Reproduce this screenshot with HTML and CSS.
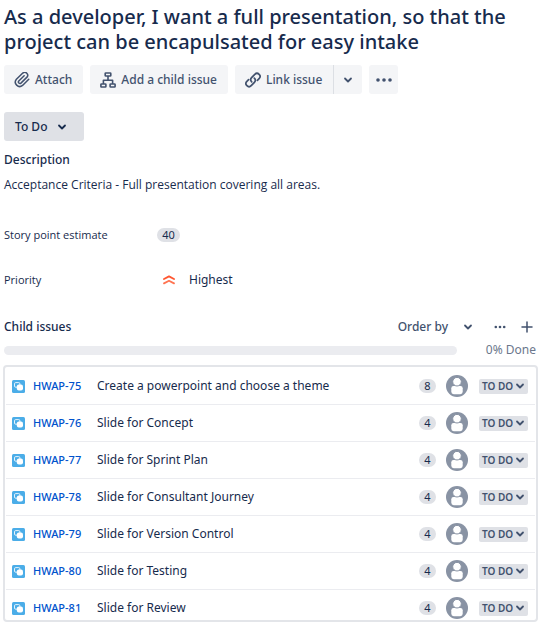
FILE: index.html
```html
<!DOCTYPE html>
<html lang="en">
<head>
<meta charset="utf-8">
<title>Issue details</title>
<link rel="stylesheet" href="styles.css">
</head>
<body>
<svg class="sprite" aria-hidden="true">
  <symbol id="chevron" viewBox="0 0 10 10"><path d="M2 3.5 5 6.5 8 3.5" fill="none" stroke="currentColor" stroke-width="1.8" stroke-linecap="round" stroke-linejoin="round"/></symbol>
  <symbol id="subtask" viewBox="0 0 13 13">
    <rect width="13" height="13" rx="1.5" fill="#4bade8"/>
    <rect x="2.5" y="2.6" width="5.4" height="4.6" rx="1.2" fill="none" stroke="#fff" stroke-opacity=".85" stroke-width="1"/>
    <rect x="4.8" y="4.6" width="6.2" height="5.8" rx="2" fill="#fff"/>
  </symbol>
  <symbol id="avatar" viewBox="0 0 22 22">
    <circle cx="11" cy="11" r="11" fill="#8993a4"/>
    <path d="M5.3 13.2a2.2 2.2 0 0 1 2.2-2.2h7a2.2 2.2 0 0 1 2.2 2.2v3.6q0 2.4-2.4 2.4H7.7q-2.4 0-2.4-2.4z" fill="#fff"/>
    <circle cx="11" cy="6.7" r="4.3" fill="#fff" stroke="#8993a4" stroke-width="1"/>
  </symbol>
</svg>
<main class="issue">
  <h1 class="title">As a developer, I want a full presentation, so that the project can be encapulsated for easy intake</h1>

  <div class="toolbar">
    <button class="btn" type="button">
      <svg class="icon" viewBox="3 3 18 18"><path d="M19.6 11.2l-7 6.900a4.900 4.900 0 0 1-6.900-6.900l7.200-7a3.300 3.300 0 0 1 4.700 4.600l-6.800 6.700a1.700 1.700 0 0 1-2.400-2.400l6-5.900" fill="none" stroke="currentColor" stroke-width="1.7" stroke-linecap="round" stroke-linejoin="round"/></svg>
      Attach
    </button>
    <button class="btn" type="button">
      <svg class="icon" viewBox="0 0 16 16"><g fill="none" stroke="currentColor" stroke-width="1.6" stroke-linejoin="round"><rect x="5.2" y="1" width="5.6" height="3" rx=".6"/><rect x=".9" y="12" width="5" height="3" rx=".6"/><rect x="10.1" y="12" width="5" height="3" rx=".6"/><path d="M8 4v4.3M3.4 12V8.3h9.2V12"/></g></svg>
      Add a child issue
    </button>
    <div class="split">
      <button class="btn" type="button">
        <svg class="icon" viewBox="0 0 16 16"><g fill="none" stroke="currentColor" stroke-width="1.7" stroke-linecap="round"><path d="M6.7 9.8a3 3 0 0 1-.1-4.2l3.2-3.3a3 3 0 0 1 4.3 4.3l-1.7 1.7"/><path d="M9.3 6.2a3 3 0 0 1 .1 4.2l-3.2 3.3a3 3 0 0 1-4.3-4.3l1.7-1.7"/></g></svg>
        Link issue
      </button>
      <button class="btn btn-square" type="button" aria-label="More link options"><svg class="chevron"><use href="#chevron"/></svg></button>
    </div>
    <button class="btn btn-square" type="button" aria-label="More actions"><svg class="icon" viewBox="0 0 16 16" fill="currentColor"><circle cx="2" cy="8" r="1.8"/><circle cx="8" cy="8" r="1.8"/><circle cx="14" cy="8" r="1.8"/></svg></button>
  </div>

  <button class="btn status" type="button">To Do <svg class="chevron"><use href="#chevron"/></svg></button>

  <section class="description">
    <h2 class="heading">Description</h2>
    <p class="text">Acceptance Criteria - Full presentation covering all areas.</p>
  </section>

  <dl class="fields">
    <dt>Story point estimate</dt>
    <dd><span class="badge badge-story">40</span></dd>
    <dt>Priority</dt>
    <dd class="priority"><svg class="priority-icon" viewBox="0 0 12 10"><g fill="none" stroke-width="1.8" stroke-linecap="round" stroke-linejoin="round"><path d="M1 4 6 1.4l5 2.6" stroke="#ff5630"/><path d="M1 8.4 6 5.8l5 2.6" stroke="#ff7452"/></g></svg>Highest</dd>
  </dl>

  <section>
    <div class="children-header">
      <h2 class="heading">Child issues</h2>
      <button class="plain order" type="button">Order by <svg class="chevron"><use href="#chevron"/></svg></button>
      <button class="plain" type="button" aria-label="More"><svg class="small-icon" viewBox="0 0 12 12" fill="currentColor"><circle cx="1.8" cy="6" r="1.3"/><circle cx="6" cy="6" r="1.3"/><circle cx="10.2" cy="6" r="1.3"/></svg></button>
      <button class="plain add" type="button" aria-label="Create child issue"><svg class="small-icon" viewBox="0 0 12 12"><path d="M6 1v10M1 6h10" stroke="currentColor" stroke-width="1.5" stroke-linecap="round"/></svg></button>
    </div>
    <div class="progress-row">
      <div class="progress" role="progressbar" aria-label="Done" aria-valuenow="0" aria-valuemin="0" aria-valuemax="100"></div>
      <span class="done">0% Done</span>
    </div>
    <ul class="children">
      <li class="child"><svg class="type"><use href="#subtask"/></svg><a class="key" href="#HWAP-75">HWAP-75</a><span class="summary">Create a powerpoint and choose a theme</span><span class="badge">8</span><svg class="avatar"><use href="#avatar"/></svg><button class="lozenge" type="button">TO DO<svg class="chevron"><use href="#chevron"/></svg></button></li>
      <li class="child"><svg class="type"><use href="#subtask"/></svg><a class="key" href="#HWAP-76">HWAP-76</a><span class="summary">Slide for Concept</span><span class="badge">4</span><svg class="avatar"><use href="#avatar"/></svg><button class="lozenge" type="button">TO DO<svg class="chevron"><use href="#chevron"/></svg></button></li>
      <li class="child"><svg class="type"><use href="#subtask"/></svg><a class="key" href="#HWAP-77">HWAP-77</a><span class="summary">Slide for Sprint Plan</span><span class="badge">4</span><svg class="avatar"><use href="#avatar"/></svg><button class="lozenge" type="button">TO DO<svg class="chevron"><use href="#chevron"/></svg></button></li>
      <li class="child"><svg class="type"><use href="#subtask"/></svg><a class="key" href="#HWAP-78">HWAP-78</a><span class="summary">Slide for Consultant Journey</span><span class="badge">4</span><svg class="avatar"><use href="#avatar"/></svg><button class="lozenge" type="button">TO DO<svg class="chevron"><use href="#chevron"/></svg></button></li>
      <li class="child"><svg class="type"><use href="#subtask"/></svg><a class="key" href="#HWAP-79">HWAP-79</a><span class="summary">Slide for Version Control</span><span class="badge">4</span><svg class="avatar"><use href="#avatar"/></svg><button class="lozenge" type="button">TO DO<svg class="chevron"><use href="#chevron"/></svg></button></li>
      <li class="child"><svg class="type"><use href="#subtask"/></svg><a class="key" href="#HWAP-80">HWAP-80</a><span class="summary">Slide for Testing</span><span class="badge">4</span><svg class="avatar"><use href="#avatar"/></svg><button class="lozenge" type="button">TO DO<svg class="chevron"><use href="#chevron"/></svg></button></li>
      <li class="child"><svg class="type"><use href="#subtask"/></svg><a class="key" href="#HWAP-81">HWAP-81</a><span class="summary">Slide for Review</span><span class="badge">4</span><svg class="avatar"><use href="#avatar"/></svg><button class="lozenge" type="button">TO DO<svg class="chevron"><use href="#chevron"/></svg></button></li>
    </ul>
  </section>
</main>
</body>
</html>
```

FILE: styles.css
```css
* { box-sizing: border-box; }

body {
  margin: 0;
  background: #fff;
  color: #172b4d;
  font: 12px/20px "Noto Sans", "Open Sans", sans-serif;
}

h1, h2, p, dl, dd, ul { margin: 0; padding: 0; }

button {
  border: 0;
  font: inherit;
  color: inherit;
  cursor: pointer;
}

svg { display: block; flex: none; }

.sprite { position: absolute; width: 0; height: 0; }

.issue { padding: 4px 7px 4px 4px; }

.title {
  font-size: 20px;
  font-weight: 500;
  line-height: 25px;
}

.toolbar {
  display: flex;
  gap: 7px;
  margin-top: 11px;
}

.btn {
  display: flex;
  align-items: center;
  gap: 5px;
  height: 29px;
  padding: 0 11px 0 10px;
  border-radius: 3px;
  background: #f4f5f7;
  color: #42526e;
  font-weight: 500;
}

.split { display: flex; }
.split .btn:first-child { border-radius: 3px 0 0 3px; }
.split .btn:last-child {
  border-left: 1px solid #dcdfe4;
  border-radius: 0 3px 3px 0;
}

.btn-square {
  justify-content: center;
  width: 29px;
  padding: 0;
}

.icon { width: 16px; height: 16px; }
.small-icon { width: 12px; height: 12px; }
.chevron { width: 10px; height: 10px; }

.status {
  gap: 10px;
  width: 80px;
  margin-top: 18px;
  padding-left: 11px;
  background: #dfe1e6;
  color: #172b4d;
}

.description { margin-top: 9px; }

.heading {
  font-size: 12px;
  font-weight: 500;
}

.text {
  margin-top: 5px;
  font-family: "Open Sans", "Noto Sans", sans-serif;
}

.fields {
  display: grid;
  grid-template-columns: 153px 1fr;
  row-gap: 25px;
  align-items: center;
  margin-top: 30px;
}

.fields dt {
  font-family: "Open Sans", "Noto Sans", sans-serif;
  font-size: 11px;
}

.badge {
  display: block;
  min-width: 17px;
  height: 14px;
  padding: 0 5px;
  border-radius: 7px;
  background: #dfe1e6;
  font-size: 11px;
  line-height: 14px;
  text-align: center;
}

.badge-story { width: 23px; }

.priority {
  display: flex;
  align-items: center;
  gap: 14px;
  padding-left: 6px;
}

.priority-icon { width: 12px; height: 10px; }

.children-header {
  display: flex;
  align-items: center;
  gap: 21px;
  margin-top: 27px;
  padding-right: 5px;
}

.children-header .heading { flex: 1; }

.plain {
  padding: 0;
  background: none;
  color: #42526e;
}

.order {
  display: flex;
  align-items: center;
  gap: 15px;
  font-weight: 500;
}

.add { margin-left: -6px; }

.progress-row {
  display: flex;
  align-items: center;
  gap: 29px;
  margin-top: 3px;
  padding-right: 2px;
}

.progress {
  flex: 1;
  height: 9px;
  border-radius: 5px;
  background: #ebecf0;
}

.done { color: #6b778c; }

.children {
  margin: 5px 0 0 -1px;
  padding-top: 1px;
  border: 2px solid #e3e5e9;
  border-radius: 4px;
  list-style: none;
}

.child {
  display: flex;
  align-items: center;
  height: 37px;
  margin: 0 1px;
  padding: 0 7px 0 6px;
  border-bottom: 1px solid #ebecf0;
}

.child:last-child {
  height: 30px;
  padding-top: 6px;
  border: 0;
}

.type { width: 13px; height: 13px; }

.key {
  width: 64px;
  margin-left: 8px;
  color: #0052cc;
  font-size: 11px;
  font-weight: 500;
  text-decoration: none;
}

.summary { flex: 1; }

.avatar {
  width: 22px;
  height: 22px;
  margin: 0 11px 0 10px;
}

.lozenge {
  display: flex;
  align-items: center;
  justify-content: center;
  gap: 2px;
  width: 49px;
  height: 15px;
  padding: 0;
  border-radius: 2px;
  background: #dfe1e6;
  color: #42526e;
  font-size: 10px;
  font-weight: 600;
}
```
